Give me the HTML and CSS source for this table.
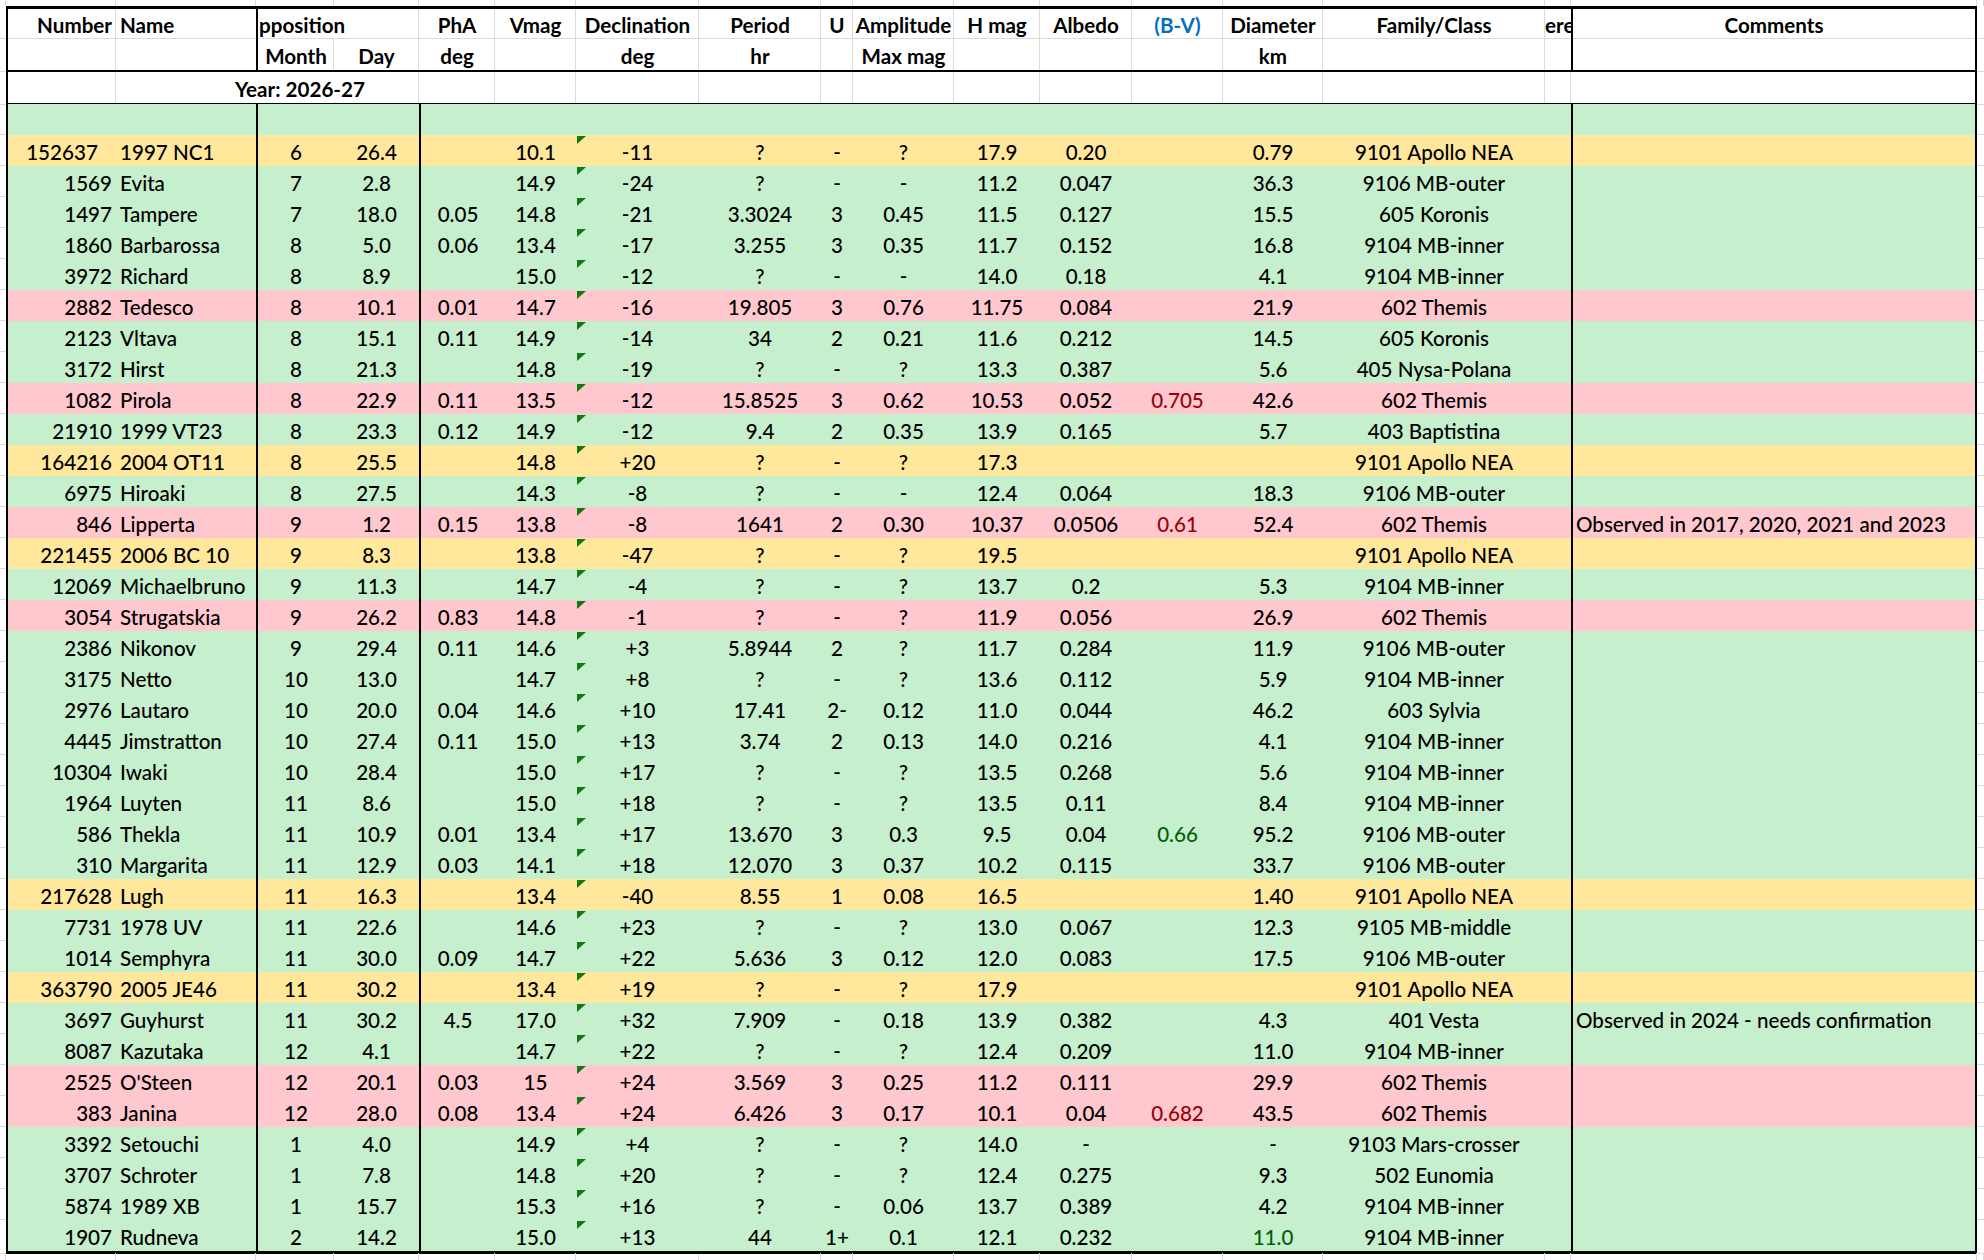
FILE: index.html
```html
<!DOCTYPE html>
<html lang="en">
<head>
<meta charset="utf-8">
<title>Asteroid oppositions 2026-27</title>
<link rel="stylesheet" href="styles.css">
</head>
<body>
<div class="sheet">
<div class="edge"><i></i><i></i><i></i><i></i><i></i><i></i><i></i><i></i><i></i><i></i><i></i><i></i><i></i><i></i><i></i><i></i><i></i><i></i><i></i></div>
<div class="r hd h1"><i></i><span>Number</span><span>Name</span><span>pposition</span><span></span><span>PhA</span><span>Vmag</span><span>Declination</span><span>Period</span><span>U</span><span>Amplitude</span><span>H mag</span><span>Albedo</span><span class="bl">(B-V)</span><span>Diameter</span><span>Family/Class</span><span>ere</span><span>Comments</span><i></i></div>
<div class="r hd h2"><i></i><span></span><span></span><span>Month</span><span>Day</span><span>deg</span><span></span><span>deg</span><span>hr</span><span></span><span>Max mag</span><span></span><span></span><span></span><span>km</span><span></span><span></span><span></span><i></i></div>
<div class="r hd yr"><i></i><span></span><span></span><span><span class="yt">Year: 2026-27</span></span><span></span><span></span><span></span><span></span><span></span><span></span><span></span><span></span><span></span><span></span><span></span><span></span><span></span><span></span><i></i></div>
<div class="r dat g"><i></i><span></span><span></span><span></span><span></span><span></span><span></span><span></span><span></span><span></span><span></span><span></span><span></span><span></span><span></span><span></span><span></span><span></span><i></i></div>
<div class="r dat d y"><i></i><span class="c">152637</span><span>1997 NC1</span><span>6</span><span>26.4</span><span></span><span>10.1</span><span>-11</span><span>?</span><span>-</span><span>?</span><span>17.9</span><span>0.20</span><span></span><span>0.79</span><span>9101 Apollo NEA</span><span></span><span></span><i></i></div>
<div class="r dat d g"><i></i><span>1569</span><span>Evita</span><span>7</span><span>2.8</span><span></span><span>14.9</span><span>-24</span><span>?</span><span>-</span><span>-</span><span>11.2</span><span>0.047</span><span></span><span>36.3</span><span>9106 MB-outer</span><span></span><span></span><i></i></div>
<div class="r dat d g"><i></i><span>1497</span><span>Tampere</span><span>7</span><span>18.0</span><span>0.05</span><span>14.8</span><span>-21</span><span>3.3024</span><span>3</span><span>0.45</span><span>11.5</span><span>0.127</span><span></span><span>15.5</span><span>605 Koronis</span><span></span><span></span><i></i></div>
<div class="r dat d g"><i></i><span>1860</span><span>Barbarossa</span><span>8</span><span>5.0</span><span>0.06</span><span>13.4</span><span>-17</span><span>3.255</span><span>3</span><span>0.35</span><span>11.7</span><span>0.152</span><span></span><span>16.8</span><span>9104 MB-inner</span><span></span><span></span><i></i></div>
<div class="r dat d g"><i></i><span>3972</span><span>Richard</span><span>8</span><span>8.9</span><span></span><span>15.0</span><span>-12</span><span>?</span><span>-</span><span>-</span><span>14.0</span><span>0.18</span><span></span><span>4.1</span><span>9104 MB-inner</span><span></span><span></span><i></i></div>
<div class="r dat d p"><i></i><span>2882</span><span>Tedesco</span><span>8</span><span>10.1</span><span>0.01</span><span>14.7</span><span>-16</span><span>19.805</span><span>3</span><span>0.76</span><span>11.75</span><span>0.084</span><span></span><span>21.9</span><span>602 Themis</span><span></span><span></span><i></i></div>
<div class="r dat d g"><i></i><span>2123</span><span>Vltava</span><span>8</span><span>15.1</span><span>0.11</span><span>14.9</span><span>-14</span><span>34</span><span>2</span><span>0.21</span><span>11.6</span><span>0.212</span><span></span><span>14.5</span><span>605 Koronis</span><span></span><span></span><i></i></div>
<div class="r dat d g"><i></i><span>3172</span><span>Hirst</span><span>8</span><span>21.3</span><span></span><span>14.8</span><span>-19</span><span>?</span><span>-</span><span>?</span><span>13.3</span><span>0.387</span><span></span><span>5.6</span><span>405 Nysa-Polana</span><span></span><span></span><i></i></div>
<div class="r dat d p"><i></i><span>1082</span><span>Pirola</span><span>8</span><span>22.9</span><span>0.11</span><span>13.5</span><span>-12</span><span>15.8525</span><span>3</span><span>0.62</span><span>10.53</span><span>0.052</span><span class="rd">0.705</span><span>42.6</span><span>602 Themis</span><span></span><span></span><i></i></div>
<div class="r dat d g"><i></i><span>21910</span><span>1999 VT23</span><span>8</span><span>23.3</span><span>0.12</span><span>14.9</span><span>-12</span><span>9.4</span><span>2</span><span>0.35</span><span>13.9</span><span>0.165</span><span></span><span>5.7</span><span>403 Baptistina</span><span></span><span></span><i></i></div>
<div class="r dat d y"><i></i><span>164216</span><span>2004 OT11</span><span>8</span><span>25.5</span><span></span><span>14.8</span><span>+20</span><span>?</span><span>-</span><span>?</span><span>17.3</span><span></span><span></span><span></span><span>9101 Apollo NEA</span><span></span><span></span><i></i></div>
<div class="r dat d g"><i></i><span>6975</span><span>Hiroaki</span><span>8</span><span>27.5</span><span></span><span>14.3</span><span>-8</span><span>?</span><span>-</span><span>-</span><span>12.4</span><span>0.064</span><span></span><span>18.3</span><span>9106 MB-outer</span><span></span><span></span><i></i></div>
<div class="r dat d p"><i></i><span>846</span><span>Lipperta</span><span>9</span><span>1.2</span><span>0.15</span><span>13.8</span><span>-8</span><span>1641</span><span>2</span><span>0.30</span><span>10.37</span><span>0.0506</span><span class="rd">0.61</span><span>52.4</span><span>602 Themis</span><span></span><span>Observed in 2017, 2020, 2021 and 2023</span><i></i></div>
<div class="r dat d y"><i></i><span>221455</span><span>2006 BC 10</span><span>9</span><span>8.3</span><span></span><span>13.8</span><span>-47</span><span>?</span><span>-</span><span>?</span><span>19.5</span><span></span><span></span><span></span><span>9101 Apollo NEA</span><span></span><span></span><i></i></div>
<div class="r dat d g"><i></i><span>12069</span><span>Michaelbruno</span><span>9</span><span>11.3</span><span></span><span>14.7</span><span>-4</span><span>?</span><span>-</span><span>?</span><span>13.7</span><span>0.2</span><span></span><span>5.3</span><span>9104 MB-inner</span><span></span><span></span><i></i></div>
<div class="r dat d p"><i></i><span>3054</span><span>Strugatskia</span><span>9</span><span>26.2</span><span>0.83</span><span>14.8</span><span>-1</span><span>?</span><span>-</span><span>?</span><span>11.9</span><span>0.056</span><span></span><span>26.9</span><span>602 Themis</span><span></span><span></span><i></i></div>
<div class="r dat d g"><i></i><span>2386</span><span>Nikonov</span><span>9</span><span>29.4</span><span>0.11</span><span>14.6</span><span>+3</span><span>5.8944</span><span>2</span><span>?</span><span>11.7</span><span>0.284</span><span></span><span>11.9</span><span>9106 MB-outer</span><span></span><span></span><i></i></div>
<div class="r dat d g"><i></i><span>3175</span><span>Netto</span><span>10</span><span>13.0</span><span></span><span>14.7</span><span>+8</span><span>?</span><span>-</span><span>?</span><span>13.6</span><span>0.112</span><span></span><span>5.9</span><span>9104 MB-inner</span><span></span><span></span><i></i></div>
<div class="r dat d g"><i></i><span>2976</span><span>Lautaro</span><span>10</span><span>20.0</span><span>0.04</span><span>14.6</span><span>+10</span><span>17.41</span><span>2-</span><span>0.12</span><span>11.0</span><span>0.044</span><span></span><span>46.2</span><span>603 Sylvia</span><span></span><span></span><i></i></div>
<div class="r dat d g"><i></i><span>4445</span><span>Jimstratton</span><span>10</span><span>27.4</span><span>0.11</span><span>15.0</span><span>+13</span><span>3.74</span><span>2</span><span>0.13</span><span>14.0</span><span>0.216</span><span></span><span>4.1</span><span>9104 MB-inner</span><span></span><span></span><i></i></div>
<div class="r dat d g"><i></i><span>10304</span><span>Iwaki</span><span>10</span><span>28.4</span><span></span><span>15.0</span><span>+17</span><span>?</span><span>-</span><span>?</span><span>13.5</span><span>0.268</span><span></span><span>5.6</span><span>9104 MB-inner</span><span></span><span></span><i></i></div>
<div class="r dat d g"><i></i><span>1964</span><span>Luyten</span><span>11</span><span>8.6</span><span></span><span>15.0</span><span>+18</span><span>?</span><span>-</span><span>?</span><span>13.5</span><span>0.11</span><span></span><span>8.4</span><span>9104 MB-inner</span><span></span><span></span><i></i></div>
<div class="r dat d g"><i></i><span>586</span><span>Thekla</span><span>11</span><span>10.9</span><span>0.01</span><span>13.4</span><span>+17</span><span>13.670</span><span>3</span><span>0.3</span><span>9.5</span><span>0.04</span><span class="gn">0.66</span><span>95.2</span><span>9106 MB-outer</span><span></span><span></span><i></i></div>
<div class="r dat d g"><i></i><span>310</span><span>Margarita</span><span>11</span><span>12.9</span><span>0.03</span><span>14.1</span><span>+18</span><span>12.070</span><span>3</span><span>0.37</span><span>10.2</span><span>0.115</span><span></span><span>33.7</span><span>9106 MB-outer</span><span></span><span></span><i></i></div>
<div class="r dat d y"><i></i><span>217628</span><span>Lugh</span><span>11</span><span>16.3</span><span></span><span>13.4</span><span>-40</span><span>8.55</span><span>1</span><span>0.08</span><span>16.5</span><span></span><span></span><span>1.40</span><span>9101 Apollo NEA</span><span></span><span></span><i></i></div>
<div class="r dat d g"><i></i><span>7731</span><span>1978 UV</span><span>11</span><span>22.6</span><span></span><span>14.6</span><span>+23</span><span>?</span><span>-</span><span>?</span><span>13.0</span><span>0.067</span><span></span><span>12.3</span><span>9105 MB-middle</span><span></span><span></span><i></i></div>
<div class="r dat d g"><i></i><span>1014</span><span>Semphyra</span><span>11</span><span>30.0</span><span>0.09</span><span>14.7</span><span>+22</span><span>5.636</span><span>3</span><span>0.12</span><span>12.0</span><span>0.083</span><span></span><span>17.5</span><span>9106 MB-outer</span><span></span><span></span><i></i></div>
<div class="r dat d y"><i></i><span>363790</span><span>2005 JE46</span><span>11</span><span>30.2</span><span></span><span>13.4</span><span>+19</span><span>?</span><span>-</span><span>?</span><span>17.9</span><span></span><span></span><span></span><span>9101 Apollo NEA</span><span></span><span></span><i></i></div>
<div class="r dat d g"><i></i><span>3697</span><span>Guyhurst</span><span>11</span><span>30.2</span><span>4.5</span><span>17.0</span><span>+32</span><span>7.909</span><span>-</span><span>0.18</span><span>13.9</span><span>0.382</span><span></span><span>4.3</span><span>401 Vesta</span><span></span><span>Observed in 2024 - needs confirmation</span><i></i></div>
<div class="r dat d g"><i></i><span>8087</span><span>Kazutaka</span><span>12</span><span>4.1</span><span></span><span>14.7</span><span>+22</span><span>?</span><span>-</span><span>?</span><span>12.4</span><span>0.209</span><span></span><span>11.0</span><span>9104 MB-inner</span><span></span><span></span><i></i></div>
<div class="r dat d p"><i></i><span>2525</span><span>O'Steen</span><span>12</span><span>20.1</span><span>0.03</span><span>15</span><span>+24</span><span>3.569</span><span>3</span><span>0.25</span><span>11.2</span><span>0.111</span><span></span><span>29.9</span><span>602 Themis</span><span></span><span></span><i></i></div>
<div class="r dat d p"><i></i><span>383</span><span>Janina</span><span>12</span><span>28.0</span><span>0.08</span><span>13.4</span><span>+24</span><span>6.426</span><span>3</span><span>0.17</span><span>10.1</span><span>0.04</span><span class="rd">0.682</span><span>43.5</span><span>602 Themis</span><span></span><span></span><i></i></div>
<div class="r dat d g"><i></i><span>3392</span><span>Setouchi</span><span>1</span><span>4.0</span><span></span><span>14.9</span><span>+4</span><span>?</span><span>-</span><span>?</span><span>14.0</span><span>-</span><span></span><span>-</span><span>9103 Mars-crosser</span><span></span><span></span><i></i></div>
<div class="r dat d g"><i></i><span>3707</span><span>Schroter</span><span>1</span><span>7.8</span><span></span><span>14.8</span><span>+20</span><span>?</span><span>-</span><span>?</span><span>12.4</span><span>0.275</span><span></span><span>9.3</span><span>502 Eunomia</span><span></span><span></span><i></i></div>
<div class="r dat d g"><i></i><span>5874</span><span>1989 XB</span><span>1</span><span>15.7</span><span></span><span>15.3</span><span>+16</span><span>?</span><span>-</span><span>0.06</span><span>13.7</span><span>0.389</span><span></span><span>4.2</span><span>9104 MB-inner</span><span></span><span></span><i></i></div>
<div class="r dat d g last"><i></i><span>1907</span><span>Rudneva</span><span>2</span><span>14.2</span><span></span><span>15.0</span><span>+13</span><span>44</span><span>1+</span><span>0.1</span><span>12.1</span><span>0.232</span><span></span><span class="gn">11.0</span><span>9104 MB-inner</span><span></span><span></span><i></i></div>
<div class="edge bot"><i></i><i></i><i></i><i></i><i></i><i></i><i></i><i></i><i></i><i></i><i></i><i></i><i></i><i></i><i></i><i></i><i></i><i></i><i></i></div>
</div>
</body>
</html>
```

FILE: styles.css
```css
:root {
  --cols: 6px 110px 140px 78px 85px 76px 81px 123px 122px 32px 101px 86px 92px 91px 100px 222px 26px 406px 7px;
  --grid: #dadada;
  --line: #000;
}

* {
  box-sizing: border-box;
  margin: 0;
  padding: 0;
}

html, body {
  background: #fff;
}

body {
  width: 1984px;
  height: 1260px;
  overflow: hidden;
  font-family: Lato, "Noto Sans", sans-serif;
  font-size: 20.6px;
  font-weight: 500;
  color: #000;
}

.sheet {
  display: flex;
  flex-direction: column;
}

/* ---------- rows ---------- */
.r,
.edge {
  display: grid;
  grid-template-columns: var(--cols);
}

.r { height: 31px; }
.h1, .h2 { height: 33px; }
.yr { height: 32px; }
.last { height: 33px; }
.edge { height: 6px; }
.edge.bot { height: 7px; }

.r > * {
  display: block;
  white-space: nowrap;
  padding-top: 3px;
  line-height: 28px;
  text-align: center;
  font-style: normal;
}

.r > i { box-shadow: inset 0 -1px 0 var(--grid); }
.edge > i { display: block; box-shadow: inset -1px 0 0 var(--grid); }

/* ---------- header ---------- */
.hd { font-weight: 700; }

.h1 > span {
  border-top: 3px solid var(--line);
  padding-top: 2px;
  box-shadow: inset -1px -1px 0 var(--grid);
}
.h1 > :nth-child(3),
.h1 > :nth-child(4),
.h1 > :nth-child(17),
.h1 > :nth-child(18) { box-shadow: inset 0 -1px 0 var(--grid); }

.h2 > span {
  border-bottom: 2px solid var(--line);
  box-shadow: inset -1px 0 0 var(--grid);
}
.h2 > :nth-child(3),
.h2 > :nth-child(17),
.h2 > :nth-child(18) { box-shadow: none; }

.yr > span {
  border-bottom: 2px solid var(--line);
  box-shadow: inset -1px 0 0 var(--grid);
}
.yr > :nth-child(3),
.yr > :nth-child(4),
.yr > :nth-child(18) { box-shadow: none; }

.yr > :nth-child(4) {
  display: flex;
  justify-content: center;
  padding-left: 10px;
}
.yt { white-space: nowrap; }

/* ---------- borders ---------- */
.h1 > :nth-child(2),
.h2 > :nth-child(2),
.yr > :nth-child(2),
.dat > :nth-child(2) { border-left: 2px solid var(--line); }

.h1 > :nth-child(4),
.h2 > :nth-child(4),
.dat > :nth-child(4),
.dat > :nth-child(6) { border-left: 2px solid var(--line); }

.h1 > :nth-child(18),
.h2 > :nth-child(18),
.dat > :nth-child(18) { border-left: 2px solid var(--line); }

.r > :nth-child(18) { border-right: 2px solid var(--line); }

.last > span { border-bottom: 3px solid var(--line); }

/* ---------- alignment ---------- */
.r > :nth-child(2) { text-align: right; padding-right: 4px; }
.r > :nth-child(3) { text-align: left; padding-left: 4px; }
.r > :nth-child(18) { text-align: left; padding-left: 3px; }
.h1 > :nth-child(18) { text-align: center; padding-left: 0; }
.h1 > :nth-child(4) { text-align: left; padding-left: 1px; }
.h1 > :nth-child(17) { text-align: left; overflow: hidden; }
.r > .c { text-align: center; padding-right: 0; }

/* ---------- fills ---------- */
.g > span { background: #c6efce; }
.y > span { background: #ffe79b; }
.p > span { background: #ffc7ce; }

/* ---------- text colours ---------- */
.bl { color: #0070c0; }
.rd { color: #9c0006; }
.gn { color: #006100; }

/* ---------- "number stored as text" indicator ---------- */
.d > :nth-child(8) { position: relative; }
.d > :nth-child(8)::before {
  content: "";
  position: absolute;
  left: 1px;
  top: 1px;
  border-top: 8px solid #10790f;
  border-right: 9px solid transparent;
}
```
